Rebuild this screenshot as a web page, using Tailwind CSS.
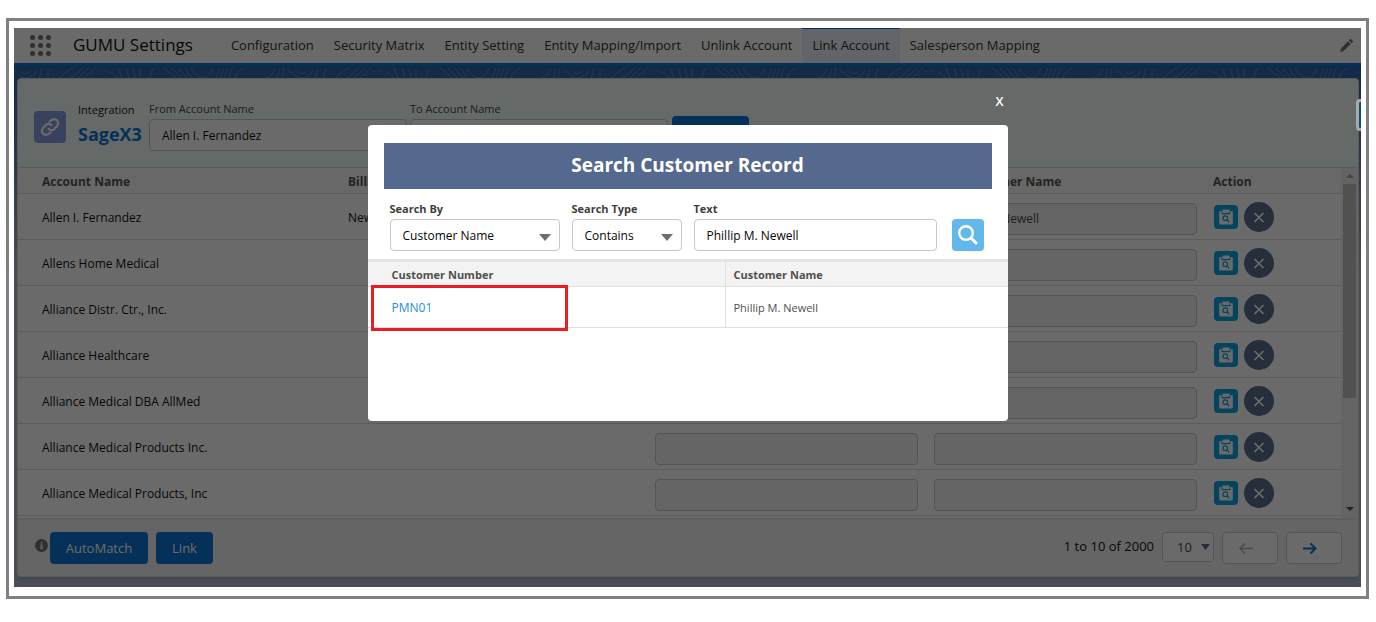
<!DOCTYPE html>
<html lang="en">
<head>
    <meta charset="UTF-8">
    <meta name="viewport" content="width=device-width, initial-scale=1.0">
    <title>GUMU Settings</title>
    <script src="https://cdn.jsdelivr.net/npm/@tailwindcss/browser@4"></script>
</head>
<body class="bg-white font-['Open_Sans','Noto_Sans',sans-serif] text-xs text-[#080707]">

    <!-- Icons -->
    <svg class="hidden">
        <symbol id="icon-record" viewBox="0 0 24 24">
            <path fill="#fff" d="M6.200 6H7.500v2.500q0 .8.8.8h7.400q.8 0 .8-.8V6h1.300q1 0 1 1v11.500q0 1-1 1H6.200q-1 0-1-1V7q0-1 1-1z" />
            <path fill="#fff" d="M9 4.500h6q.6 0 .6.6v2.300q0 .6-.6.6H9q-.6 0-.6-.6V5.100q0-.6.6-.6z" />
            <circle cx="11.300" cy="13.200" r="2.300" fill="none" stroke="#00a1df" stroke-width="1.200" />
            <path stroke="#00a1df" stroke-width="1.300" d="M13 14.900l2.300 2.300" />
        </symbol>
        <symbol id="icon-close" viewBox="0 0 30 30">
            <path stroke="#fff" stroke-width="1.700" d="M10.500 11l9 9M19.500 11l-9 9" />
        </symbol>
    </svg>

    <div class="mt-[18px] ml-1.5 mr-[7px] border-[3px] border-[#808080] px-[5px] pt-[7px] pb-[9px]">
        <div class="relative overflow-hidden bg-[#b0bcd8]">

            <!-- Navigation -->
            <header class="flex h-[38px] items-stretch border-b-[3px] border-[#0070d2] bg-white pl-4 pr-2">
                <button class="flex items-center" aria-label="App launcher">
                    <svg width="21" height="21" viewBox="0 0 21 21" fill="#706e6b">
                        <circle cx="2.500" cy="2.500" r="2.500" /><circle cx="10.500" cy="2.500" r="2.500" /><circle cx="18.500" cy="2.500" r="2.500" />
                        <circle cx="2.500" cy="10.500" r="2.500" /><circle cx="10.500" cy="10.500" r="2.500" /><circle cx="18.500" cy="10.500" r="2.500" />
                        <circle cx="2.500" cy="18.500" r="2.500" /><circle cx="10.500" cy="18.500" r="2.500" /><circle cx="18.500" cy="18.500" r="2.500" />
                    </svg>
                </button>
                <h1 class="ml-[22px] mr-7 flex items-center text-[17px]">GUMU Settings</h1>
                <nav class="flex text-[13px] text-[#2b2826]">
                    <a href="#" class="flex items-center px-2.5">Configuration</a>
                    <a href="#" class="flex items-center px-2.5">Security Matrix</a>
                    <a href="#" class="flex items-center px-2.5">Entity Setting</a>
                    <a href="#" class="flex items-center px-2.5">Entity Mapping/Import</a>
                    <a href="#" class="flex items-center px-2.5">Unlink Account</a>
                    <a href="#" class="flex items-center border-t border-[#0070d2] bg-[#e5f1fb] px-2.5">Link Account</a>
                    <a href="#" class="flex items-center px-2.5">Salesperson Mapping</a>
                </nav>
                <button class="ml-auto flex items-center" aria-label="Edit">
                    <svg width="13" height="13" viewBox="0 0 13 13" fill="#706e6b">
                        <path d="M0 13l1-3.600L8 2.300l2.700 2.700L3.600 12zM8.800 1.500l1.200-1.200q.5-.5 1 0l1.700 1.700q.5.5 0 1L11.500 4.200z" />
                    </svg>
                </button>
            </header>

            <main class="relative bg-linear-to-b from-[#1d5fa6] to-[#b0bcd8] to-40% pt-3 pb-2.5 pl-[3px] pr-[2px]">
                <svg class="absolute inset-x-0 top-0 h-full w-full" fill="none">
                    <defs>
                        <pattern id="topo" width="276" height="120" patternUnits="userSpaceOnUse">
                            <g stroke="#5485bb" stroke-width="1">
                                <path d="M0 4q5 8 11 8q8 0 12-8M6 5q5 5 11 0M25 12q3-4 2-10M34 12q-1-6 3-10" />
                                <path d="M46 12q5-7 13-10M57 12L69 2M64 12L75 2M70 12L82 2" />
                                <path stroke-dasharray="4 3" d="M76 10q8-7 16-5t12 7" />
                                <path d="M104 2l4 10M112 2l3 10M119 2l2 10M126 2v10M136 12q1-6 3-10" />
                                <path d="M150 2l12 10M158 2l9 10M165 2l8 10M171 2l6 10M177 2q6 10 12 10t10-10M206 2l-4 10M210 2l-4 10M214 2l-4 10M218 2l-3 10M230 2q-8 4-9 10" />
                                <path d="M252 12q7-2 9-10M263 12q3-5 2-10M268 12l2-10M274 2q0 3 2 5" />
                            </g>
                        </pattern>
                    </defs>
                    <rect width="100%" height="120" fill="url(#topo)" />
                </svg>

                <div class="relative overflow-hidden rounded border border-[#dddbda] bg-white shadow-md">

                    <!-- Account filter -->
                    <div class="flex h-[88px] bg-[#f1fffc] pl-4">
                        <div class="mt-8 flex size-8 items-center justify-center rounded bg-[#8199df]">
                            <svg width="20" height="20" viewBox="0 0 20 20" fill="none" stroke="#fff" stroke-width="2.200" stroke-linecap="round">
                                <path d="M9.500 4.600l1.800-1.500q3.200-2 5.600.3t.2 5.600l-3.300 3.300q-2.600 2-5.200-.4" />
                                <path d="M10.500 15.400l-1.800 1.500q-3.200 2-5.600-.3t-.2-5.600l3.300-3.300q2.600-2 5.200.4" />
                            </svg>
                        </div>
                        <div class="ml-3 mt-[21px] w-[71px]">
                            <p class="text-[11px] leading-5">Integration</p>
                            <p class="text-lg leading-7 font-bold text-[#0070d2]">SageX3</p>
                        </div>
                        <div class="mt-5 w-[258px]">
                            <label for="from-account" class="block text-[11px] leading-5 text-[#3e3e3c]">From Account Name</label>
                            <input id="from-account" type="text" value="Allen I. Fernandez" class="h-8 w-full rounded border border-[#c9c7c5] bg-white px-3">
                        </div>
                        <div class="ml-[3px] mt-5 w-[258px]">
                            <label for="to-account" class="block text-[11px] leading-5 text-[#3e3e3c]">To Account Name</label>
                            <input id="to-account" type="text" class="h-8 w-full rounded border border-[#c9c7c5] bg-white px-3">
                        </div>
                        <button class="ml-1 mt-[37px] h-8 w-[77px] rounded bg-[#0070d2] text-white" aria-label="Search"></button>
                    </div>

                    <!-- Accounts -->
                    <div class="flex border-t border-[#dddbda]">
                        <div class="min-w-0 flex-1 pb-0.5">
                            <table class="w-full table-fixed border-separate border-spacing-0 text-left">
                                <colgroup>
                                    <col class="w-[322px]"><col><col class="w-[279px]"><col class="w-[279px]"><col class="w-[136px]">
                                </colgroup>
                                <thead>
                                    <tr class="h-[26px] bg-[#fafaf9] text-[#514f4d] *:border-b *:border-[#dddbda] *:pt-0.5">
                                        <th class="pl-6">Account Name</th>
                                        <th class="pl-2">Billing</th>
                                        <th class="pl-2"></th>
                                        <th class="pl-5">X3 Customer Name</th>
                                        <th class="pl-2">Action</th>
                                    </tr>
                                </thead>
                                <tbody id="accounts"></tbody>
                            </table>
                        </div>
                        <div class="flex w-[17px] flex-col items-center justify-between bg-[#f1f1f1] pt-1.5 pb-[7px]">
                            <div class="flex flex-col items-center gap-1.5">
                                <svg width="8" height="4"><path fill="#a3a3a3" d="M0 4l4-4 4 4z" /></svg>
                                <div class="h-[214px] w-[13px] bg-[#c1c1c1]"></div>
                            </div>
                            <svg width="8" height="4"><path fill="#505050" d="M0 0h8L4 4z" /></svg>
                        </div>
                    </div>

                    <!-- Footer -->
                    <footer class="flex h-[58px] items-start border-t-2 border-[#e4e4e4] bg-[#f3f2f2] px-4 pt-3 text-[13px]">
                        <svg class="mt-[7px] ml-px" width="13" height="13" viewBox="0 0 13 13">
                            <circle cx="6.500" cy="6.500" r="6.500" fill="#706e6b" />
                            <path fill="#f3f2f2" d="M5.700 3h1.800v1.600H5.700zM5.200 5.600h2.200v3.200h.8v1H5v-1h.8V6.600h-.6z" />
                        </svg>
                        <button class="ml-0.5 h-8 w-[98px] rounded bg-[#0070d2] pt-px text-white">AutoMatch</button>
                        <button class="ml-2 h-8 w-[57px] rounded bg-[#0070d2] pt-px text-white">Link</button>
                        <span class="ml-auto mr-2 leading-7">1 to 10 of 2000</span>
                        <div class="relative">
                            <select aria-label="Rows per page" class="h-[30px] w-[52px] appearance-none rounded border border-[#c9c7c5] bg-white pt-0.5 pl-3.5 text-[#3e3e3c]">
                                <option>10</option>
                            </select>
                            <svg class="pointer-events-none absolute right-1 top-3" width="9" height="6"><path fill="#54698d" d="M0 0h9L4.500 6z" /></svg>
                        </div>
                        <button class="ml-2 flex h-8 w-14 items-center rounded border border-[#c9c7c5] bg-white pt-px pl-4" aria-label="Previous page">
                            <svg width="14" height="11" fill="none" stroke="#b0adab" stroke-width="1.500"><path d="M14 5.500H1M6 .5l-5 5 5 5" /></svg>
                        </button>
                        <button class="ml-2 flex h-8 w-14 items-center rounded border border-[#c9c7c5] bg-white pt-px pl-4" aria-label="Next page">
                            <svg width="14" height="11" fill="none" stroke="#0070d2" stroke-width="2"><path d="M0 5.500h12M7.500 .5l5 5-5 5" /></svg>
                        </button>
                    </footer>
                </div>
            </main>

            <!-- Backdrop -->
            <div class="absolute inset-0 bg-[#080707]/60"></div>
            <div class="absolute right-0 top-[71px] h-8 w-[5px] rounded-l border-[3px] border-r-0 border-[#a9a9a9] bg-[#0b4f78]"></div>

            <!-- Search dialog -->
            <div class="absolute inset-x-0 top-16 mx-auto w-[640px]" role="dialog" aria-labelledby="dialog-title">
                <button class="ml-auto mr-1 block h-[33px] pb-3.5 text-[13px] font-semibold text-white" aria-label="Close">X</button>
                <div class="h-[296px] rounded bg-white pt-[18px]">
                    <h2 id="dialog-title" class="mx-4 h-[46px] bg-[#54698d] text-center text-[19px] leading-[44px] font-bold text-white">Search Customer Record</h2>
                    <form class="flex items-end px-[22px] pt-2.5 pb-2">
                        <div class="relative w-[170px]">
                            <label for="search-by" class="block text-[11px] leading-5 font-bold text-[#3e3e3c]">Search By</label>
                            <select id="search-by" class="h-8 w-full appearance-none rounded border border-[#c9c7c5] bg-white px-3 pt-px">
                                <option>Customer Name</option>
                            </select>
                            <svg class="pointer-events-none absolute bottom-2.5 right-[9px]" width="12" height="7"><path fill="#706e6b" d="M0 0h12L6 7z" /></svg>
                        </div>
                        <div class="relative ml-3 w-[110px]">
                            <label for="search-type" class="block text-[11px] leading-5 font-bold text-[#3e3e3c]">Search Type</label>
                            <select id="search-type" class="h-8 w-full appearance-none rounded border border-[#c9c7c5] bg-white px-3 pt-px">
                                <option>Contains</option>
                            </select>
                            <svg class="pointer-events-none absolute bottom-2.5 right-[9px]" width="12" height="7"><path fill="#706e6b" d="M0 0h12L6 7z" /></svg>
                        </div>
                        <div class="ml-3 w-[243px]">
                            <label for="search-text" class="block text-[11px] leading-5 font-bold text-[#3e3e3c]">Text</label>
                            <input id="search-text" type="text" value="Phillip M. Newell" class="h-8 w-full rounded border border-[#c9c7c5] bg-white px-3">
                        </div>
                        <button type="button" class="ml-[15px] flex size-8 items-center justify-center rounded bg-[#62b7ed]" aria-label="Search">
                            <svg width="20" height="20" viewBox="0 0 20 20" fill="none" stroke="#fff">
                                <circle cx="8" cy="8" r="6.800" stroke-width="2.400" /><path stroke-width="3" stroke-linecap="round" d="M13 13l5 5" />
                            </svg>
                        </button>
                    </form>
                    <div class="relative border-t-[3px] border-[#e5e5e5] text-[11px]">
                        <table class="w-full table-fixed border-separate border-spacing-0 text-left">
                            <colgroup><col class="w-[358px]"><col></colgroup>
                            <thead>
                                <tr class="h-[25px] bg-[#f3f3f3] text-[#514f4d] *:border-b *:border-[#e0e0e0] *:pt-0.5">
                                    <th class="border-r pl-6">Customer Number</th>
                                    <th class="pl-2">Customer Name</th>
                                </tr>
                            </thead>
                            <tbody>
                                <tr class="h-[41px] text-[#514f4d] *:border-b *:border-[#e0e0e0] *:pt-0.5">
                                    <td class="border-r pl-6"><a href="#" class="text-xs text-[#2a8bdc]">PMN01</a></td>
                                    <td class="pl-2">Phillip M. Newell</td>
                                </tr>
                            </tbody>
                        </table>
                        <div class="absolute left-[3px] top-[23px] h-[46px] w-[197px] border-[3px] border-[#ed1c24]"></div>
                    </div>
                </div>
            </div>
        </div>
    </div>

    <script>
        const accounts = [
            { name: 'Allen I. Fernandez', city: 'New', customer: 'Phillip M. Newell' },
            { name: 'Allens Home Medical' },
            { name: 'Alliance Distr. Ctr., Inc.' },
            { name: 'Alliance Healthcare' },
            { name: 'Alliance Medical DBA AllMed' },
            { name: 'Alliance Medical Products Inc.' },
            { name: 'Alliance Medical Products, Inc' },
        ];

        document.getElementById('accounts').innerHTML = accounts.map(a => `
            <tr class="h-[46px] *:border-b *:border-[#dddbda]">
                <td class="pt-0.5 pl-6">${a.name}</td>
                <td class="pt-0.5 pl-2">${a.city || ''}</td>
                <td class="px-2 pt-1"><input type="text" readonly aria-label="Customer number for ${a.name}" class="block h-8 w-full rounded border border-[#c9c7c5] bg-[#f3f2f2] px-3 text-[#3e3e3c]"></td>
                <td class="px-2 pt-1"><input type="text" readonly aria-label="Customer name for ${a.name}" value="${a.customer || ''}" class="block h-8 w-full rounded border border-[#c9c7c5] bg-[#f3f2f2] px-3 text-[#3e3e3c]"></td>
                <td class="pl-[9px]">
                    <div class="flex items-center gap-1.5">
                        <button class="size-6 rounded bg-[#00a1df]" aria-label="Search record"><svg class="size-6"><use href="#icon-record" /></svg></button>
                        <button class="size-[30px] rounded-full bg-[#54698d]" aria-label="Clear"><svg class="size-[30px]"><use href="#icon-close" /></svg></button>
                    </div>
                </td>
            </tr>`).join('');
    </script>
</body>
</html>
